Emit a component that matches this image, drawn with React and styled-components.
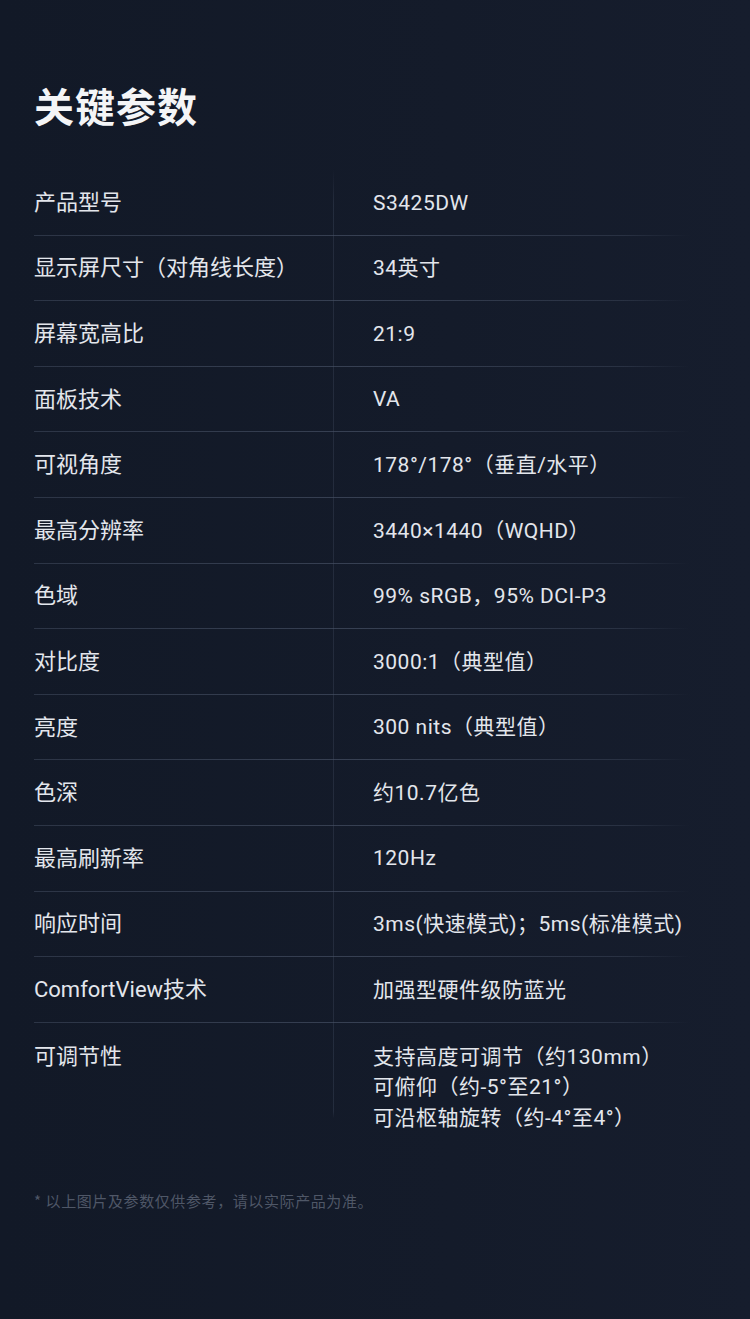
import styled, { createGlobalStyle } from "styled-components";

const GlobalStyle = createGlobalStyle`
  html, body {
    margin: 0;
    padding: 0;
    background: #131a28;
  }
  body {
    font-family: Roboto, "Noto Sans CJK SC", "Noto Sans", sans-serif;
  }
`;

const specs = [
  ["产品型号", ["S3425DW"]],
  ["显示屏尺寸（对角线长度）", ["34英寸"]],
  ["屏幕宽高比", ["21:9"]],
  ["面板技术", ["VA"]],
  ["可视角度", ["178°/178°（垂直/水平）"]],
  ["最高分辨率", ["3440×1440（WQHD）"]],
  ["色域", ["99% sRGB，95% DCI-P3"]],
  ["对比度", ["3000:1（典型值）"]],
  ["亮度", ["300 nits（典型值）"]],
  ["色深", ["约10.7亿色"]],
  ["最高刷新率", ["120Hz"]],
  ["响应时间", ["3ms(快速模式)；5ms(标准模式)"]],
  ["ComfortView技术", ["加强型硬件级防蓝光"]],
  ["可调节性", ["支持高度可调节（约130mm）", "可俯仰（约-5°至21°）", "可沿枢轴旋转（约-4°至4°）"]],
];

const Page = styled.div`
  width: 750px;
  min-height: 1319px;
  box-sizing: border-box;
  padding: 80px 0 0 34px;
  background: linear-gradient(90deg, #121927 0%, #141b2a 60%, #161d2d 100%);
  color: #e3e6ec;
`;

const Title = styled.h1`
  margin: 0 0 40px;
  font-family: "Noto Sans CJK SC", sans-serif;
  font-size: 40px;
  font-weight: 700;
  line-height: 50px;
  color: #f4f5f7;
  letter-spacing: 1px;
`;

const Table = styled.div`
  width: 656px;
  display: flex;
  flex-direction: column;
`;

const Row = styled.div`
  display: grid;
  grid-template-columns: 299px 1fr;
  position: relative;

  &:not(:last-child)::after {
    content: "";
    position: absolute;
    left: 0;
    right: 0;
    bottom: 0;
    height: 1px;
    background: linear-gradient(90deg, rgba(70, 80, 100, 0.5) 0%, rgba(70, 80, 100, 0.7) 50%, rgba(70, 80, 100, 0.4) 90%, rgba(70, 80, 100, 0) 100%);
  }
`;

const Label = styled.div`
  display: flex;
  align-items: ${({ $multi }) => ($multi ? "flex-start" : "center")};
  height: ${({ $multi }) => ($multi ? "auto" : "65.6px")};
  padding-top: ${({ $multi }) => ($multi ? "19px" : "0")};
  font-size: 22px;
  line-height: 30px;
  color: #e3e6ec;
`;

const Value = styled.div`
  display: flex;
  flex-direction: column;
  justify-content: center;
  min-height: 65.6px;
  padding: ${({ $multi }) => ($multi ? "19px 0 0 39px" : "0 0 0 39px")};
  box-sizing: border-box;
  border-left: 1px solid rgba(60, 70, 90, 0.4);
  border-image: ${({ $first, $multi }) =>
    $first
      ? "linear-gradient(180deg, rgba(60,70,90,0) 0%, rgba(60,70,90,0.4) 50%) 1"
      : $multi
      ? "linear-gradient(180deg, rgba(60,70,90,0.4) 0%, rgba(60,70,90,0.4) 80%, rgba(60,70,90,0) 86%) 1"
      : "none"};
  font-size: 21px;
  line-height: 30.5px;
  color: #e3e6ec;
  letter-spacing: 0.5px;
`;

const Note = styled.p`
  margin: 58px 0 0;
  font-family: "Noto Sans CJK SC", sans-serif;
  font-size: 15px;
  line-height: 20px;
  letter-spacing: 0.6px;
  color: #4f5767;
`;

export default function App() {
  return (
    <>
      <GlobalStyle />
      <Page>
        <Title>关键参数</Title>
        <Table>
          {specs.map(([label, values], i) => {
            const multi = values.length > 1;
            return (
              <Row key={label}>
                <Label $multi={multi}>{label}</Label>
                <Value $multi={multi} $first={i === 0}>
                  {values.map((v) => (
                    <span key={v}>{v}</span>
                  ))}
                </Value>
              </Row>
            );
          })}
        </Table>
        <Note>* 以上图片及参数仅供参考，请以实际产品为准。</Note>
      </Page>
    </>
  );
}
